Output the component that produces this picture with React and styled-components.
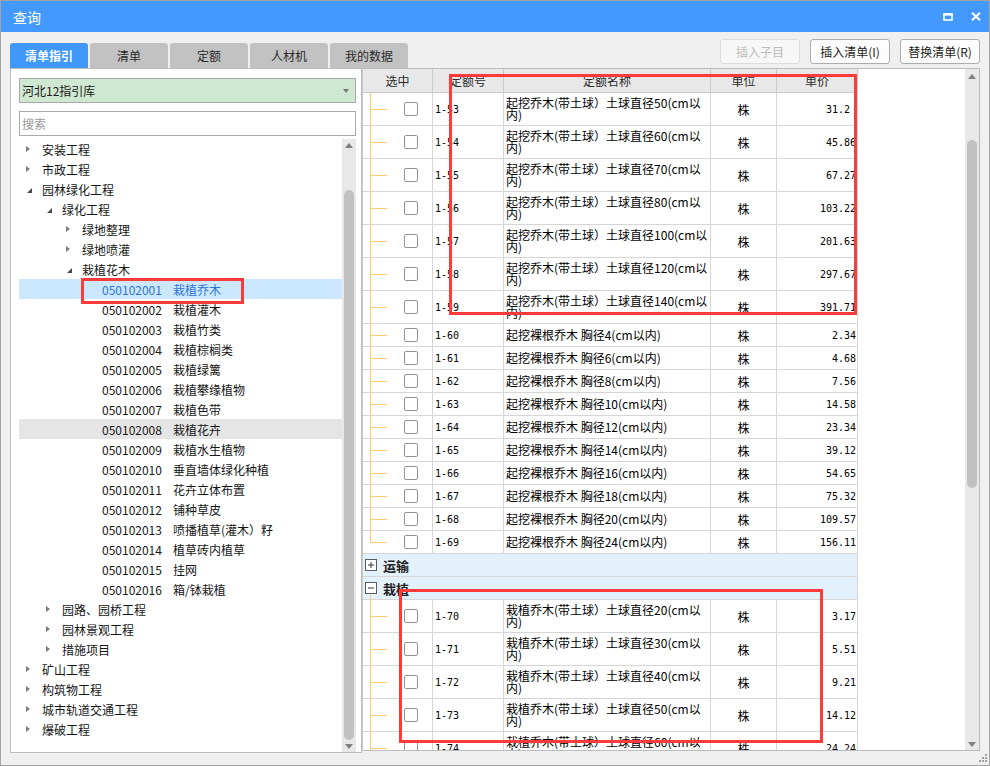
import React from 'react';
import styled, { createGlobalStyle } from 'styled-components';

const GlobalStyle = createGlobalStyle`
  html, body { margin: 0; padding: 0; background: #fff; }
  body { font-family: "Noto Sans CJK SC", "Noto Sans", sans-serif; }
  * { box-sizing: border-box; }
`;

const CJK = '"Noto Sans CJK SC", "Noto Sans", sans-serif';
const MONO = '"DejaVu Sans Mono", "Noto Sans CJK SC", monospace';

const Window = styled.div`
  position: relative;
  width: 990px;
  height: 766px;
  border: 1px solid #a3a3a3;
  background: #f0f0f0;
  display: flex;
  flex-direction: column;
  overflow: hidden;
  font-family: ${CJK};
`;

const TitleBar = styled.div`
  height: 31px;
  flex: none;
  background: #4499ff;
  color: #fff;
  font-size: 14px;
  display: flex;
  align-items: center;
  padding: 0 8px 0 12px;
`;

const TitleText = styled.span`
  flex: 1;
`;

const TitleIcons = styled.div`
  display: flex;
  align-items: center;
  gap: 18px;
`;

const Toolbar = styled.div`
  flex: none;
  height: 29px;
  margin-top: 7px;
  padding: 0 9px;
  display: flex;
  justify-content: space-between;
`;

const Tabs = styled.div`
  display: flex;
  gap: 2px;
  align-self: flex-end;
`;

const Tab = styled.div`
  width: 78px;
  height: 25px;
  border-radius: 3px 3px 0 0;
  display: flex;
  align-items: center;
  justify-content: center;
  font-size: 12px;
  background: ${p => (p.$active ? '#3f98fa' : '#c2c2c2')};
  color: ${p => (p.$active ? '#fff' : '#2a2a2a')};
  font-weight: ${p => (p.$active ? 700 : 400)};
`;

const Buttons = styled.div`
  display: flex;
  gap: 10px;
  align-self: flex-start;
`;

const Button = styled.div`
  width: 80px;
  height: 25px;
  border-radius: 3px;
  border: 1px solid ${p => (p.$disabled ? '#dcdcdc' : '#adadad')};
  background: ${p => (p.$disabled ? '#f7f7f7' : '#fdfdfd')};
  color: ${p => (p.$disabled ? '#bdbdbd' : '#1e1e1e')};
  font-size: 12px;
  display: flex;
  align-items: center;
  justify-content: center;
`;

const Content = styled.div`
  flex: none;
  display: flex;
  align-items: flex-start;
  padding: 0 9px;
`;

const LeftPanel = styled.div`
  width: 352px;
  height: 685px;
  background: #fff;
  border: 1px solid #bcbcbc;
  padding: 9px 5px 0 8px;
  display: flex;
  flex-direction: column;
`;

const Select = styled.div`
  height: 25px;
  flex: none;
  border: 1px solid #a9a9a9;
  background: #cee8d1;
  display: flex;
  align-items: center;
  padding: 0 6px 0 2px;
  font-size: 12px;
  color: #1a1a1a;
`;

const SelectText = styled.span`
  flex: 1;
`;

const DownCaret = styled.span`
  width: 0;
  height: 0;
  border-left: 3.5px solid transparent;
  border-right: 3.5px solid transparent;
  border-top: 4px solid #7a7a7a;
`;

const Search = styled.div`
  height: 25px;
  flex: none;
  margin-top: 8px;
  border: 1px solid #a9a9a9;
  background: #fff;
  display: flex;
  align-items: center;
  padding: 0 2px;
  font-size: 12px;
  color: #9a9a9a;
`;

const TreeArea = styled.div`
  margin-top: 3px;
  flex: 1;
  display: flex;
  min-height: 0;
`;

const TreeList = styled.div`
  flex: 1;
  overflow: hidden;
`;

const TreeRow = styled.div`
  height: 20px;
  display: flex;
  align-items: center;
  white-space: nowrap;
  font-size: 12px;
  padding-left: ${p => p.$level * 20}px;
  background: ${p => (p.$selected ? '#cce8ff' : p.$hover ? '#e5e5e5' : 'transparent')};
  color: ${p => (p.$selected ? '#2b74d4' : '#161616')};
`;

const Toggle = styled.span`
  width: 23px;
  height: 20px;
  flex: none;
  display: flex;
  align-items: center;
  padding-left: ${p => (p.$open ? 8 : 7)}px;
`;

const ClosedArrow = styled.span`
  width: 0;
  height: 0;
  border-top: 3.5px solid transparent;
  border-bottom: 3.5px solid transparent;
  border-left: 4px solid #7c7c7c;
`;

const OpenArrow = styled.span`
  width: 0;
  height: 0;
  margin-top: 2px;
  border-left: 5px solid transparent;
  border-bottom: 5px solid #4a4a4a;
`;

const Code = styled.span`
  width: 71px;
  flex: none;
`;

const Scrollbar = styled.div`
  width: ${p => p.$w}px;
  flex: none;
  background: #e8e8e8;
  display: flex;
  flex-direction: column;
  align-items: center;
`;

const ArrowBox = styled.div`
  height: ${p => p.$h}px;
  flex: none;
  display: flex;
  align-items: center;
  justify-content: center;
  margin-top: ${p => (p.$bottom ? 'auto' : '0')};
`;

const UpTri = styled.span`
  width: 0;
  height: 0;
  border-left: 4px solid transparent;
  border-right: 4px solid transparent;
  border-bottom: 5px solid #808080;
`;

const DownTri = styled.span`
  width: 0;
  height: 0;
  border-left: 4px solid transparent;
  border-right: 4px solid transparent;
  border-top: 5px solid #808080;
`;

const Thumb = styled.div`
  width: 10px;
  flex: none;
  border-radius: 5px;
  background: #c1c1c1;
  margin-top: ${p => p.$top}px;
  height: ${p => p.$h}px;
`;

const GridPanel = styled.div`
  flex: 1;
  height: 683px;
  background: #fff;
  border: 1px solid #bcbcbc;
  border-left-color: #c8c8c8;
  display: flex;
`;

const Table = styled.div`
  flex: 1;
  overflow: hidden;
  display: flex;
  flex-direction: column;
`;

const cols = '70px 71px 207px 66px 81px';

const HeaderRow = styled.div`
  display: grid;
  grid-template-columns: ${cols};
  height: 24px;
  flex: none;
  width: 495px;
`;

const HeaderCell = styled.div`
  background: #e8e8e8;
  border-right: 1px solid #cacaca;
  border-bottom: 1px solid #cacaca;
  display: flex;
  align-items: center;
  justify-content: center;
  font-size: 12px;
  color: #2a2a2a;
`;

const Row = styled.div`
  display: grid;
  grid-template-columns: ${cols};
  height: ${p => p.$h}px;
  flex: none;
  width: 495px;
`;

const Cell = styled.div`
  position: relative;
  border-right: 1px solid #d6d6d6;
  border-bottom: 1px solid #d6d6d6;
  display: flex;
  align-items: center;
  justify-content: ${p => p.$justify || 'flex-start'};
  padding: ${p => p.$pad || '0 2px'};
  font-size: 12px;
  color: #000;
  overflow: hidden;
  white-space: nowrap;
`;

const SelectCell = styled(Cell)`
  padding: 0 0 0 41px;
  overflow: visible;
  &::before {
    content: '';
    position: absolute;
    left: 7px;
    top: 0;
    bottom: ${p => (p.$last ? 'calc(50% - 0.5px)' : '-1px')};
    width: 1px;
    background: #ffc970;
  }
  &::after {
    content: '';
    position: absolute;
    left: 7px;
    top: calc(50% - 0.5px);
    width: 17px;
    height: 1px;
    background: #ffc970;
  }
`;

const Checkbox = styled.span`
  width: 14px;
  height: 14px;
  border: 1px solid #929292;
  border-radius: 2px;
  background: #fff;
`;

const MonoText = styled.span`
  font-family: ${MONO};
  font-size: 10px;
  letter-spacing: 0;
`;

const NameCell = styled(Cell)`
  flex-direction: column;
  align-items: flex-start;
  justify-content: center;
  line-height: 12px;
`;

const NameLine = styled.span`
  display: block;
  line-height: 12px;
`;

const GroupRow = styled.div`
  position: relative;
  width: 495px;
  height: 23px;
  flex: none;
  background: #e3f1fc;
  border-bottom: 1px solid #d6d6d6;
  border-right: 1px solid #d6d6d6;
  display: flex;
  align-items: center;
  padding-left: 2px;
  gap: 6px;
  font-size: 13px;
  font-weight: 700;
  color: #222;
  ${p =>
    p.$open &&
    `&::after {
      content: '';
      position: absolute;
      left: 7px;
      top: 18px;
      bottom: -1px;
      width: 1px;
      background: #ffc970;
    }`}
`;

const Footer = styled.div`
  flex: 1;
  display: flex;
  justify-content: flex-end;
  align-items: flex-end;
  padding: 0 2px 4px 0;
`;

const Annotation = styled.div`
  position: absolute;
  left: ${p => p.$x - 1}px;
  top: ${p => p.$y - 1}px;
  width: ${p => p.$w}px;
  height: ${p => p.$h}px;
  border: 3px solid #ff3a3a;
  pointer-events: none;
`;

const MaxIcon = () => (
  <svg width="10" height="8" viewBox="0 0 10 8">
    <rect x="1" y="1.5" width="8" height="5.5" fill="none" stroke="#fff" strokeWidth="1.6" />
    <rect x="0.2" y="0.2" width="9.6" height="2.2" fill="#fff" />
  </svg>
);

const CloseIcon = () => (
  <svg width="10" height="9" viewBox="0 0 10 9">
    <path d="M1 0.8 L9 8.2 M9 0.8 L1 8.2" stroke="#fff" strokeWidth="2" />
  </svg>
);

const BoxIcon = ({ open }) => (
  <svg width="12" height="12" viewBox="0 0 12 12">
    <rect x="0.5" y="0.5" width="11" height="11" fill="#fff" stroke="#5a5a5a" />
    <path d="M3 6 H9" stroke="#333" strokeWidth="1" />
    {!open && <path d="M6 3 V9" stroke="#333" strokeWidth="1" />}
  </svg>
);

const Grip = () => (
  <svg width="9" height="9" viewBox="0 0 9 9">
    {[
      [7, 1],
      [7, 4],
      [4, 4],
      [7, 7],
      [4, 7],
      [1, 7],
    ].map(([x, y], i) => (
      <rect key={i} x={x} y={y} width="2" height="2" fill="#a0a0a0" />
    ))}
  </svg>
);

const tree = [
  { level: 0, label: '安装工程', state: 'closed' },
  { level: 0, label: '市政工程', state: 'closed' },
  { level: 0, label: '园林绿化工程', state: 'open' },
  { level: 1, label: '绿化工程', state: 'open' },
  { level: 2, label: '绿地整理', state: 'closed' },
  { level: 2, label: '绿地喷灌', state: 'closed' },
  { level: 2, label: '栽植花木', state: 'open' },
  { level: 3, code: '050102001', label: '栽植乔木', selected: true },
  { level: 3, code: '050102002', label: '栽植灌木' },
  { level: 3, code: '050102003', label: '栽植竹类' },
  { level: 3, code: '050102004', label: '栽植棕榈类' },
  { level: 3, code: '050102005', label: '栽植绿篱' },
  { level: 3, code: '050102006', label: '栽植攀缘植物' },
  { level: 3, code: '050102007', label: '栽植色带' },
  { level: 3, code: '050102008', label: '栽植花卉', hover: true },
  { level: 3, code: '050102009', label: '栽植水生植物' },
  { level: 3, code: '050102010', label: '垂直墙体绿化种植' },
  { level: 3, code: '050102011', label: '花卉立体布置' },
  { level: 3, code: '050102012', label: '铺种草皮' },
  { level: 3, code: '050102013', label: '喷播植草(灌木）籽' },
  { level: 3, code: '050102014', label: '植草砖内植草' },
  { level: 3, code: '050102015', label: '挂网' },
  { level: 3, code: '050102016', label: '箱/钵栽植' },
  { level: 1, label: '园路、园桥工程', state: 'closed' },
  { level: 1, label: '园林景观工程', state: 'closed' },
  { level: 1, label: '措施项目', state: 'closed' },
  { level: 0, label: '矿山工程', state: 'closed' },
  { level: 0, label: '构筑物工程', state: 'closed' },
  { level: 0, label: '城市轨道交通工程', state: 'closed' },
  { level: 0, label: '爆破工程', state: 'closed' },
];

const qiwa = (no, d, price) => ({
  type: 'item',
  no,
  lines: [`起挖乔木(带土球）土球直径${d}(cm以`, '内)'],
  price,
});
const luogen = (no, d, price, last) => ({
  type: 'item',
  no,
  lines: [`起挖裸根乔木 胸径${d}(cm以内)`],
  price,
  last,
});
const zaizhi = (no, d, price) => ({
  type: 'item',
  no,
  lines: [`栽植乔木(带土球）土球直径${d}(cm以`, '内)'],
  price,
});

const rows = [
  qiwa('1-53', 50, '31.2 '),
  qiwa('1-54', 60, '45.86'),
  qiwa('1-55', 70, '67.27'),
  qiwa('1-56', 80, '103.22'),
  qiwa('1-57', 100, '201.63'),
  qiwa('1-58', 120, '297.67'),
  qiwa('1-59', 140, '391.71'),
  luogen('1-60', 4, '2.34'),
  luogen('1-61', 6, '4.68'),
  luogen('1-62', 8, '7.56'),
  luogen('1-63', 10, '14.58'),
  luogen('1-64', 12, '23.34'),
  luogen('1-65', 14, '39.12'),
  luogen('1-66', 16, '54.65'),
  luogen('1-67', 18, '75.32'),
  luogen('1-68', 20, '109.57'),
  luogen('1-69', 24, '156.11', true),
  { type: 'group', label: '运输', open: false },
  { type: 'group', label: '栽植', open: true },
  zaizhi('1-70', 20, '3.17'),
  zaizhi('1-71', 30, '5.51'),
  zaizhi('1-72', 40, '9.21'),
  zaizhi('1-73', 50, '14.12'),
  zaizhi('1-74', 60, '24.24'),
];

const tabs = ['清单指引', '清单', '定额', '人材机', '我的数据'];

export default function App() {
  return (
    <>
      <GlobalStyle />
      <Window>
        <TitleBar>
          <TitleText>查询</TitleText>
          <TitleIcons>
            <MaxIcon />
            <CloseIcon />
          </TitleIcons>
        </TitleBar>

        <Toolbar>
          <Tabs>
            {tabs.map((t, i) => (
              <Tab key={t} $active={i === 0}>
                {t}
              </Tab>
            ))}
          </Tabs>
          <Buttons>
            <Button $disabled>插入子目</Button>
            <Button>插入清单(I)</Button>
            <Button>替换清单(R)</Button>
          </Buttons>
        </Toolbar>

        <Content>
          <LeftPanel>
            <Select>
              <SelectText>河北12指引库</SelectText>
              <DownCaret />
            </Select>
            <Search>搜索</Search>
            <TreeArea>
              <TreeList>
                {tree.map((n, i) => (
                  <TreeRow key={i} $level={n.level} $selected={n.selected} $hover={n.hover}>
                    <Toggle $open={n.state === 'open'}>
                      {n.state === 'closed' && <ClosedArrow />}
                      {n.state === 'open' && <OpenArrow />}
                    </Toggle>
                    {n.code && <Code>{n.code}</Code>}
                    <span>{n.label}</span>
                  </TreeRow>
                ))}
              </TreeList>
              <Scrollbar $w={14}>
                <ArrowBox $h={12}>
                  <UpTri />
                </ArrowBox>
                <Thumb $top={39} $h={550} />
                <ArrowBox $h={12} $bottom>
                  <DownTri />
                </ArrowBox>
              </Scrollbar>
            </TreeArea>
          </LeftPanel>

          <GridPanel>
            <Table>
              <HeaderRow>
                <HeaderCell>选中</HeaderCell>
                <HeaderCell>定额号</HeaderCell>
                <HeaderCell>定额名称</HeaderCell>
                <HeaderCell>单位</HeaderCell>
                <HeaderCell>单价</HeaderCell>
              </HeaderRow>
              {rows.map((r, i) =>
                r.type === 'group' ? (
                  <GroupRow key={i} $open={r.open}>
                    <BoxIcon open={r.open} />
                    <span>{r.label}</span>
                  </GroupRow>
                ) : (
                  <Row key={i} $h={r.lines.length > 1 ? 33 : 23}>
                    <SelectCell $last={r.last}>
                      <Checkbox />
                    </SelectCell>
                    <Cell>
                      <MonoText>{r.no}</MonoText>
                    </Cell>
                    <NameCell>
                      {r.lines.map((l, j) => (
                        <NameLine key={j}>{l}</NameLine>
                      ))}
                    </NameCell>
                    <Cell $justify="center">株</Cell>
                    <Cell $justify="flex-end" $pad="0 1px 0 2px">
                      <MonoText style={{ whiteSpace: 'pre' }}>{r.price}</MonoText>
                    </Cell>
                  </Row>
                )
              )}
            </Table>
            <Scrollbar $w={14}>
              <ArrowBox $h={14}>
                <UpTri />
              </ArrowBox>
              <Thumb $top={57} $h={348} />
              <ArrowBox $h={12} $bottom>
                <DownTri />
              </ArrowBox>
            </Scrollbar>
          </GridPanel>
        </Content>

        <Footer>
          <Grip />
        </Footer>

        <Annotation $x={449} $y={74} $w={408} $h={241} />
        <Annotation $x={399} $y={589} $w={424} $h={154} />
        <Annotation $x={81} $y={278} $w={163} $h={26} />
      </Window>
    </>
  );
}
